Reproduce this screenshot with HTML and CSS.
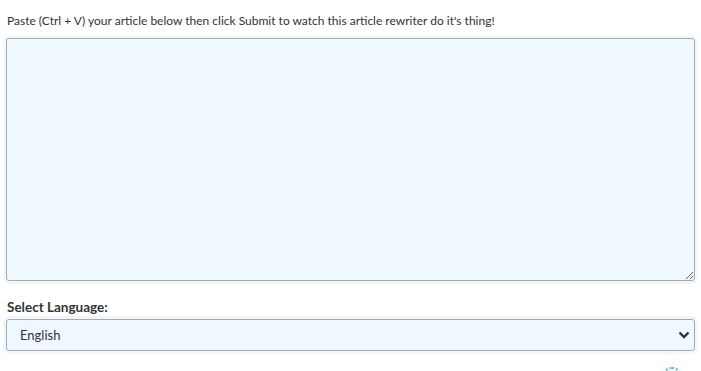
FILE: index.html
```html
<!DOCTYPE html>
<html lang="en">
<head>
  <meta charset="UTF-8">
  <link rel="stylesheet" href="styles.css">
  <title>Article Rewriter</title>
</head>
<body>
  <div class="rewriter">
    <p class="intro">Paste (Ctrl + V) your article below then click Submit to watch this article rewriter do it's thing!</p>
    <textarea class="field article" name="article"></textarea>
    <label class="label" for="lang">Select Language:</label>
    <div class="select-wrap">
      <select id="lang" class="field lang">
        <option>English</option>
      </select>
      <svg class="chevron" width="12" height="8" viewBox="0 0 12 8"><path d="M1.5 1.5 L6 6 L10.5 1.5" fill="none" stroke="#333" stroke-width="2.4"/></svg>
    </div>
    <div class="footer-row">
      <span class="spinner"></span>
    </div>
  </div>
</body>
</html>
```

FILE: styles.css
```css
html, body {
  margin: 0;
  padding: 0;
  background: #fff;
}

body {
  font-family: "Lato", "Open Sans", sans-serif;
  font-size: 12px;
  color: #333;
  height: 371px;
  overflow: hidden;
}

.rewriter {
  display: flex;
  flex-direction: column;
  padding: 0 6px;
  height: 371px;
  box-sizing: border-box;
  overflow: hidden;
}

.intro {
  margin: 13px 1px 0;
  line-height: 16px;
}

.field {
  box-sizing: border-box;
  width: 100%;
  background: #eff8fe;
  border: 1px solid #a9a9a9;
  border-radius: 3px;
  box-shadow: 0 0 0 3px #f1f8fd;
  font-family: inherit;
  font-size: 13px;
  color: #333;
}

.article {
  flex: none;
  height: 243px;
  margin-top: 9px;
  resize: vertical;
}

.label {
  font-weight: bold;
  font-size: 13.5px;
  margin: 18px 1px 4px;
  line-height: 16px;
}

.select-wrap {
  position: relative;
  flex: none;
}

.lang {
  height: 32px;
  padding: 0 13px;
  appearance: none;
  -webkit-appearance: none;
}

.chevron {
  position: absolute;
  right: 5px;
  top: 12px;
  pointer-events: none;
}

.footer-row {
  display: flex;
  justify-content: flex-end;
  padding: 16px 12px 0 0;
}

.spinner {
  flex: none;
  width: 18px;
  height: 18px;
  border-radius: 50%;
  border: 2px dotted #37c6e8;
}
```
